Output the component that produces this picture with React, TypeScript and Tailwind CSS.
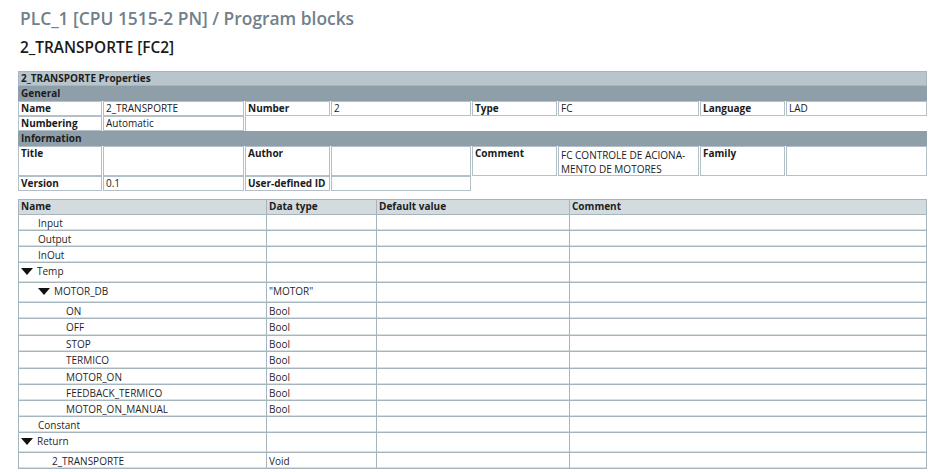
import React from 'react';

const font = { fontFamily: '"Open Sans", "Noto Sans", Arial, sans-serif' };

const Tri: React.FC = () => (
  <svg width="12" height="7" viewBox="0 0 12 7" className="inline-block mr-[4px] mb-[1px]">
    <polygon points="0,0 12,0 6,7" fill="#111" />
  </svg>
);

type Row = { name: string; indent: number; open?: boolean; type?: string; h: string };

const rows: Row[] = [
  { name: 'Input', indent: 1, h: 'h-[16px]' },
  { name: 'Output', indent: 1, h: 'h-[16px]' },
  { name: 'InOut', indent: 1, h: 'h-[16px]' },
  { name: 'Temp', indent: 0, open: true, h: 'h-[20px]' },
  { name: 'MOTOR_DB', indent: 1, open: true, type: '"MOTOR"', h: 'h-[20px]' },
  { name: 'ON', indent: 3, type: 'Bool', h: 'h-[16px]' },
  { name: 'OFF', indent: 3, type: 'Bool', h: 'h-[17px]' },
  { name: 'STOP', indent: 3, type: 'Bool', h: 'h-[16px]' },
  { name: 'TERMICO', indent: 3, type: 'Bool', h: 'h-[17px]' },
  { name: 'MOTOR_ON', indent: 3, type: 'Bool', h: 'h-[16px]' },
  { name: 'FEEDBACK_TERMICO', indent: 3, type: 'Bool', h: 'h-[16px]' },
  { name: 'MOTOR_ON_MANUAL', indent: 3, type: 'Bool', h: 'h-[16px]' },
  { name: 'Constant', indent: 1, h: 'h-[16px]' },
  { name: 'Return', indent: 0, open: true, h: 'h-[20px]' },
  { name: '2_TRANSPORTE', indent: 2, type: 'Void', h: 'h-[16px]' },
];

const indentCls = ['pl-[2px]', 'pl-[19px]', 'pl-[33px]', 'pl-[47px]'];

const Cell: React.FC<{ children?: React.ReactNode; bold?: boolean; className?: string }> = ({ children, bold, className = '' }) => (
  <div
    className={`border border-[#b3c0c8] px-[2px] text-[10px] leading-[13px] text-[#1a1a1a] overflow-hidden whitespace-nowrap ${bold ? 'font-bold' : ''} ${className}`}
  >
    {children}
  </div>
);

const Properties: React.FC = () => (
  <div className="grid grid-cols-[84px_141px_85px_140px_85px_141px_85px_141px] gap-x-px w-[909px]">
    <div className="col-span-8 h-[15px] bg-[#b9c5cc] border border-[#a7b5be] px-[2px] text-[10px] leading-[13px] font-bold text-[#1d1d1d]">
      2_TRANSPORTE Properties
    </div>
    <div className="col-span-8 h-[15px] bg-[#8e9fa9] border-x border-[#8e9fa9] px-[2px] text-[10px] leading-[14px] font-bold text-[#1d1d1d]">
      General
    </div>
    <Cell bold className="h-[15px]">Name</Cell>
    <Cell className="h-[15px]">2_TRANSPORTE</Cell>
    <Cell bold className="h-[15px]">Number</Cell>
    <Cell className="h-[15px]">2</Cell>
    <Cell bold className="h-[15px]">Type</Cell>
    <Cell className="h-[15px]">FC</Cell>
    <Cell bold className="h-[15px]">Language</Cell>
    <Cell className="h-[15px]">LAD</Cell>
    <Cell bold className="h-[15px]">Numbering</Cell>
    <Cell className="h-[15px]">Automatic</Cell>
    <div className="col-span-6 h-[15px] border-l border-[#b3c0c8]" />
    <div className="col-span-8 h-[15px] bg-[#8e9fa9] border-x border-[#8e9fa9] px-[2px] text-[10px] leading-[14px] font-bold text-[#1d1d1d]">
      Information
    </div>
    <Cell bold className="h-[30px]">Title</Cell>
    <Cell className="h-[30px]" />
    <Cell bold className="h-[30px]">Author</Cell>
    <Cell className="h-[30px]" />
    <Cell bold className="h-[30px]">Comment</Cell>
    <Cell className="h-[30px] whitespace-normal leading-[14px] pt-[1px]">
      FC CONTROLE DE ACIONA-
      <br />
      MENTO DE MOTORES
    </Cell>
    <Cell bold className="h-[30px]">Family</Cell>
    <Cell className="h-[30px]" />
    <Cell bold className="h-[15px]">Version</Cell>
    <Cell className="h-[15px]">0.1</Cell>
    <Cell bold className="h-[15px]">User-defined ID</Cell>
    <Cell className="h-[15px]" />
  </div>
);

const td = 'border-r border-b border-[#a6b4bd] shadow-[inset_0_-1px_0_#d9e0e4] align-top px-[2px] pt-[2px] text-[10px] leading-[12px] text-[#1f1f1f] whitespace-nowrap';

const Variables: React.FC = () => (
  <table className="table-fixed border-separate border-spacing-0 w-[908px] border-l border-t border-[#a6b4bd]">
    <colgroup>
      <col className="w-[248px]" />
      <col className="w-[110px]" />
      <col className="w-[193px]" />
      <col className="w-[357px]" />
    </colgroup>
    <thead>
      <tr className="h-[15px] bg-[#d4dbdf]">
        {['Name', 'Data type', 'Default value', 'Comment'].map((h) => (
          <th key={h} className="border-r border-b border-[#a6b4bd] px-[2px] text-left align-top text-[10px] leading-[13px] font-bold text-[#1d1d1d]">
            {h}
          </th>
        ))}
      </tr>
    </thead>
    <tbody>
      {rows.map((r) => (
        <tr key={r.name} className={r.h}>
          <td className={`${td} ${indentCls[r.indent]}`}>
            {r.open && <Tri />}
            {r.name}
          </td>
          <td className={td}>{r.type ?? ''}</td>
          <td className={td} />
          <td className={td} />
        </tr>
      ))}
    </tbody>
  </table>
);

export default function App() {
  return (
    <div className="w-[934px] h-[472px] bg-white pl-[18px] pt-[6px] overflow-hidden" style={font}>
      <h1 className="text-[17.4px] leading-[24px] font-semibold text-[#71808a] pl-[2px]">
        PLC_1 [CPU 1515-2 PN] / Program blocks
      </h1>
      <h2 className="mt-[8px] text-[15.4px] leading-[20px] font-semibold text-[#1a1a1a] pl-[2px]">
        2_TRANSPORTE [FC2]
      </h2>
      <div className="mt-[13px]">
        <Properties />
      </div>
      <div className="mt-[8px]">
        <Variables />
      </div>
    </div>
  );
}
